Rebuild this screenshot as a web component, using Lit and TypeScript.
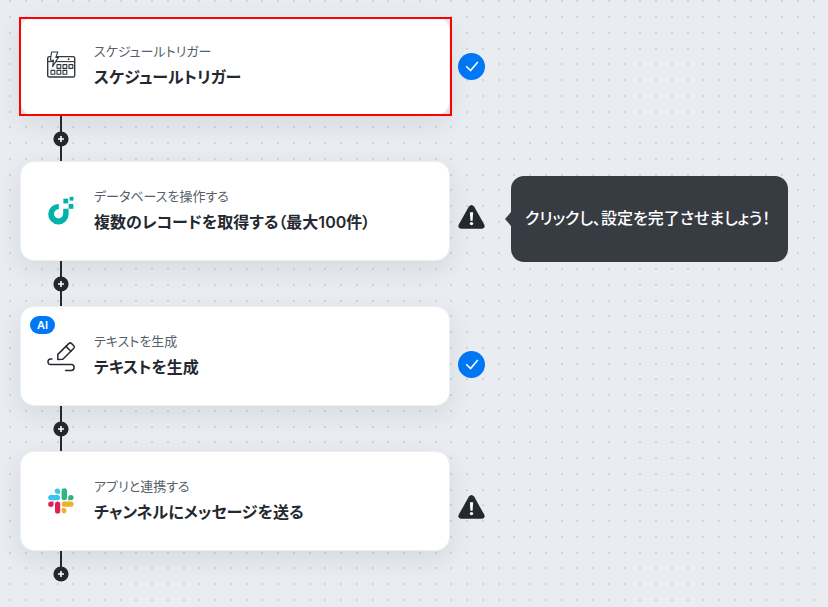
import { LitElement, html, css, svg, nothing } from "lit";
import type { TemplateResult } from "lit";
import { customElement, property } from "lit/decorators.js";
import { classMap } from "lit/directives/class-map.js";

type IconName = "schedule" | "database" | "write" | "slack";

interface Step {
  icon: IconName;
  kind: string;
  title: string;
  done: boolean;
  selected?: boolean;
  ai?: boolean;
  hint?: string;
}

const STEPS: Step[] = [
  { icon: "schedule", kind: "スケジュールトリガー", title: "スケジュールトリガー", done: true, selected: true },
  {
    icon: "database",
    kind: "データベースを操作する",
    title: "複数のレコードを取得する（最大100件）",
    done: false,
    hint: "クリックし、設定を完了させましょう！",
  },
  { icon: "write", kind: "テキストを生成", title: "テキストを生成", done: true, ai: true },
  { icon: "slack", kind: "アプリと連携する", title: "チャンネルにメッセージを送る", done: false },
];

const ICONS: Record<IconName, TemplateResult> = {
  schedule: svg`
    <g fill="none" stroke="#33383e" stroke-width="1.1" stroke-linejoin="round">
      <rect x="0.7" y="5.6" width="27" height="20.4" rx="1.6" stroke-width="1.4"/>
      <path d="M1 10.6H27.4"/>
      <rect x="10" y="13.6" width="3.8" height="3.8"/><rect x="16" y="13.6" width="3.8" height="3.8"/><rect x="22" y="13.6" width="3.8" height="3.8"/>
      <rect x="4" y="19.4" width="3.8" height="3.8"/><rect x="10" y="19.4" width="3.8" height="3.8"/><rect x="16" y="19.4" width="3.8" height="3.8"/>
      <path fill="#fff" d="M4.6 1H10.8L8.8 6.4H11.4L5.6 15.6L6.6 9.2H3.4Z"/>
    </g>
    <circle cx="21.6" cy="8.2" r="0.9" fill="#24292f"/>`,
  database: svg`
    <g fill="#00b2a9">
      <path d="M11.8 8V13.2A4.6 4.6 0 1 0 16.2 17.8V12.8H21.6V18.2A10.2 10.2 0 1 1 11.8 8Z"/>
      <rect x="16.4" y="2.6" width="4.8" height="4.8"/>
      <rect x="22.6" y="0.8" width="3.8" height="3.8"/>
      <rect x="21.6" y="8" width="4.8" height="4.8"/>
    </g>`,
  write: svg`
    <g fill="none" stroke="#24292f" stroke-width="1.5" stroke-linecap="round" stroke-linejoin="round">
      <path d="M10.8 13.4L22 2.4Q23.2 1.4 24.4 2.4L26.8 4.8Q27.8 6 26.8 7.2L15.8 18.2L10.8 18.4Z"/>
      <path d="M19 5.4L23.8 10.2"/>
      <path d="M5 18H3.6C0.2 18 0 23.6 3.6 23.6H24.4C28 23.6 28 29.4 24.4 29.4H18.6"/>
    </g>`,
  slack: svg`
    <g transform="translate(0 1)">
      <g fill="#36c5f0"><path d="M10.4 1.4a2.7 2.7 0 0 1 2.7 2.7v2.7h-2.7a2.7 2.7 0 0 1 0-5.4z"/><rect x="1.2" y="8" width="11.9" height="5.2" rx="2.6"/></g>
      <g fill="#2eb67d"><path d="M26.6 10.6a2.7 2.7 0 0 1-2.7 2.7h-2.7v-2.7a2.7 2.7 0 0 1 5.4 0z"/><rect x="14.6" y="1.2" width="5.4" height="12" rx="2.7"/></g>
      <g fill="#ecb22e"><path d="M17.4 26.4a2.7 2.7 0 0 1-2.7-2.7v-2.6h2.7a2.7 2.7 0 0 1 0 5.3z"/><rect x="14.7" y="14.6" width="11.9" height="5.2" rx="2.6"/></g>
      <g fill="#e01e5a"><path d="M1.2 17.3a2.7 2.7 0 0 1 2.7-2.7h2.7v2.7a2.7 2.7 0 0 1-5.4 0z"/><rect x="8" y="14.6" width="5.2" height="12" rx="2.6"/></g>
    </g>`,
};

@customElement("flow-step")
class FlowStep extends LitElement {
  @property({ attribute: false }) step!: Step;

  static styles = css`
    :host {
      display: flex;
      align-items: center;
      gap: 8px;
    }
    .card {
      position: relative;
      box-sizing: border-box;
      flex: 0 1 430px;
      min-width: 0;
      display: flex;
      align-items: center;
      gap: 19px;
      margin: 0;
      padding: 24px 20px 26px 26px;
      border: 1px solid #eceff3;
      border-radius: 14px;
      background: #fff;
      box-shadow: 0 8px 24px rgba(36, 47, 41, 0.1);
      color: #24292f;
      font: inherit;
      text-align: left;
    }
    .selected::after {
      content: "";
      position: absolute;
      inset: 0 -3px -1px -2px;
      border: 2px solid #f00;
    }
    .icon {
      flex: none;
      width: 28px;
      height: 28px;
      overflow: visible;
    }
    .text {
      display: grid;
      gap: 4px;
    }
    .kind {
      color: #57606a;
      font-size: 13px;
      line-height: 20px;
    }
    .title {
      font-size: 16px;
      font-weight: 600;
      line-height: 24px;
    }
    .badge {
      position: absolute;
      top: 9px;
      left: 9px;
      padding: 0 7px;
      border-radius: 9px;
      background: #0077f5;
      color: #fff;
      font-size: 11px;
      font-weight: 600;
      line-height: 18px;
    }
    .status {
      flex: none;
      width: 27px;
      height: 28px;
      padding: 0;
      border: 0;
      background: none;
    }
    .status svg {
      display: block;
    }
    .lowered {
      margin-block: 8px -8px;
    }
    .hint {
      position: relative;
      margin-left: 18px;
      padding: 30px 18px 32px 14px;
      border-radius: 13px;
      background: #373b42;
      color: #fff;
      font-size: 16px;
      font-weight: 500;
      line-height: 24px;
    }
    .hint::before {
      content: "";
      position: absolute;
      top: 50%;
      right: 100%;
      width: 6px;
      height: 14px;
      margin-top: -7px;
      background: #373b42;
      clip-path: polygon(100% 0, 0 50%, 100% 100%);
    }
  `;

  render() {
    const { icon, kind, title, done, selected, ai, hint } = this.step;
    const lowered = !selected;
    return html`
      <button class=${classMap({ card: true, selected: !!selected })}>
        ${ai ? html`<span class="badge">AI</span>` : nothing}
        <svg class="icon" viewBox="0 0 28 28" aria-hidden="true">${ICONS[icon]}</svg>
        <span class="text">
          <span class="kind">${kind}</span>
          <span class="title">${title}</span>
        </span>
      </button>
      <button class=${classMap({ status: true, lowered })} aria-label=${done ? "設定済み" : "未設定"}>
        <svg width="27" height="28" viewBox="0 0 27 28" aria-hidden="true">
          ${done
            ? svg`<circle cx="13.5" cy="14.5" r="13.5" fill="#0077f5"/>
                <path d="M8.2 14.3L12.6 18.6L19.8 10" fill="none" stroke="#fff" stroke-width="1.6"/>`
            : svg`<path d="M10.9 1.6Q13.5 -1.6 16.1 1.6L26.2 19.6Q27.6 23.4 24 23.8H3Q-0.6 23.4 0.8 19.6Z" fill="#24292f"/>
                <path d="M11.9 7.2H15.1L14.6 15.8H12.4Z" fill="#fff"/><circle cx="13.5" cy="18.6" r="1.7" fill="#fff"/>`}
        </svg>
      </button>
      ${hint ? html`<div class="hint lowered" role="tooltip">${hint}</div>` : nothing}
    `;
  }
}

@customElement("app-root")
class AppRoot extends LitElement {
  static styles = css`
    :host {
      display: block;
      font-family: Inter, "Noto Sans CJK JP", sans-serif;
      font-feature-settings: "palt";
    }
    .canvas {
      position: relative;
      box-sizing: border-box;
      min-height: 100vh;
      padding: 16px 20px;
      background: #e9edf2;
    }
    .dots {
      position: absolute;
      inset: 0;
      width: 100%;
      height: 100%;
    }
    .flow {
      position: relative;
      margin: 0;
      padding: 0;
      list-style: none;
    }
    .link {
      box-sizing: border-box;
      display: grid;
      place-items: start center;
      width: 82px;
      height: 45px;
      padding-top: 15px;
      background: linear-gradient(#24292f, #24292f) center / 2px 100% no-repeat;
    }
    .item:last-child .link {
      background-size: 2px 50%;
      background-position: top;
    }
    .add {
      padding: 0;
      border: 0;
      background: none;
    }
    .add svg {
      display: block;
    }
  `;

  render() {
    return html`
      <main class="canvas">
        <svg class="dots" aria-hidden="true">
          <pattern id="dots" x="9" width="63" height="63" patternUnits="userSpaceOnUse">
            ${[0, 16, 32, 48].map((y) =>
              [0, 16, 32, 48].map((x) => svg`<rect x=${x} y=${y} width="2" height="2" fill="#d0d5da"/>`)
            )}
          </pattern>
          <rect width="100%" height="100%" fill="url(#dots)" />
        </svg>
        <ol class="flow">
          ${STEPS.map(
            (step) => html`
              <li class="item">
                <flow-step .step=${step}></flow-step>
                <div class="link">
                  <button class="add" aria-label="ステップを追加">
                    <svg width="16" height="16" viewBox="0 0 16 16" aria-hidden="true">
                      <circle cx="8" cy="8" r="7.6" fill="#24292f" />
                      <path d="M8 5V11M5 8H11" stroke="#fff" stroke-width="1.6" />
                    </svg>
                  </button>
                </div>
              </li>
            `
          )}
        </ol>
      </main>
    `;
  }
}
